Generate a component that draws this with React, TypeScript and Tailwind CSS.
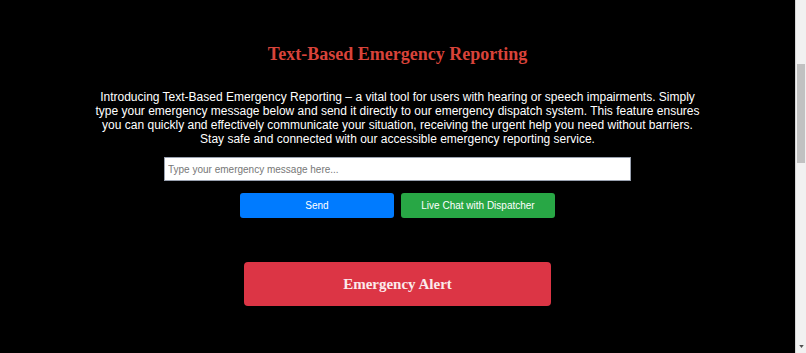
export default function App() {
  return (
    <div className="flex h-screen overflow-hidden bg-black font-['Liberation_Sans',Arial,sans-serif] text-white">
      <main className="flex flex-1 flex-col items-center px-4 pt-[42px]">
        <h1 className="font-['Liberation_Serif','Times_New_Roman',serif] text-[18px] font-bold leading-6 text-[#d8433a]">
          Text-Based Emergency Reporting
        </h1>
        <p className="mt-6 text-center text-[12px] leading-[14px]">
          Introducing Text-Based Emergency Reporting – a vital tool for users with hearing or speech impairments. Simply
          <br />
          type your emergency message below and send it directly to our emergency dispatch system. This feature ensures
          <br />
          you can quickly and effectively communicate your situation, receiving the urgent help you need without barriers.
          <br />
          Stay safe and connected with our accessible emergency reporting service.
        </p>
        <input
          type="text"
          placeholder="Type your emergency message here..."
          className="mt-[11px] h-6 w-[467px] border border-gray-400 bg-white px-[3px] text-[10px] text-black placeholder:text-[#777] focus:outline-none"
        />
        <div className="mt-3 flex gap-[7px]">
          <button className="h-[25px] w-[154px] rounded-[3px] bg-[#007bff] text-[10px] text-white">Send</button>
          <button className="h-[25px] w-[154px] rounded-[3px] bg-[#28a745] text-[10px] text-white">
            Live Chat with Dispatcher
          </button>
        </div>
        <button className="mt-[44px] h-[44px] w-[307px] rounded-[4px] bg-[#dc3545] font-['Liberation_Serif','Times_New_Roman',serif] text-[15px] font-bold text-[#fbeaec]">
          Emergency Alert
        </button>
      </main>

      {/* page scrollbar, photographed part-way down */}
      <aside className="flex w-[11px] flex-col border-l border-[#d4d4d4] bg-[#f1f1f1]">
        <div className="mx-auto mt-[64px] h-[99px] w-[8px] bg-[#c1c1c1]" />
        <svg viewBox="0 0 6 4" className="mx-auto mt-auto mb-[5px] h-[3px] w-[5px]">
          <path d="M0 0h6L3 4z" fill="#505050" />
        </svg>
      </aside>
    </div>
  );
}
